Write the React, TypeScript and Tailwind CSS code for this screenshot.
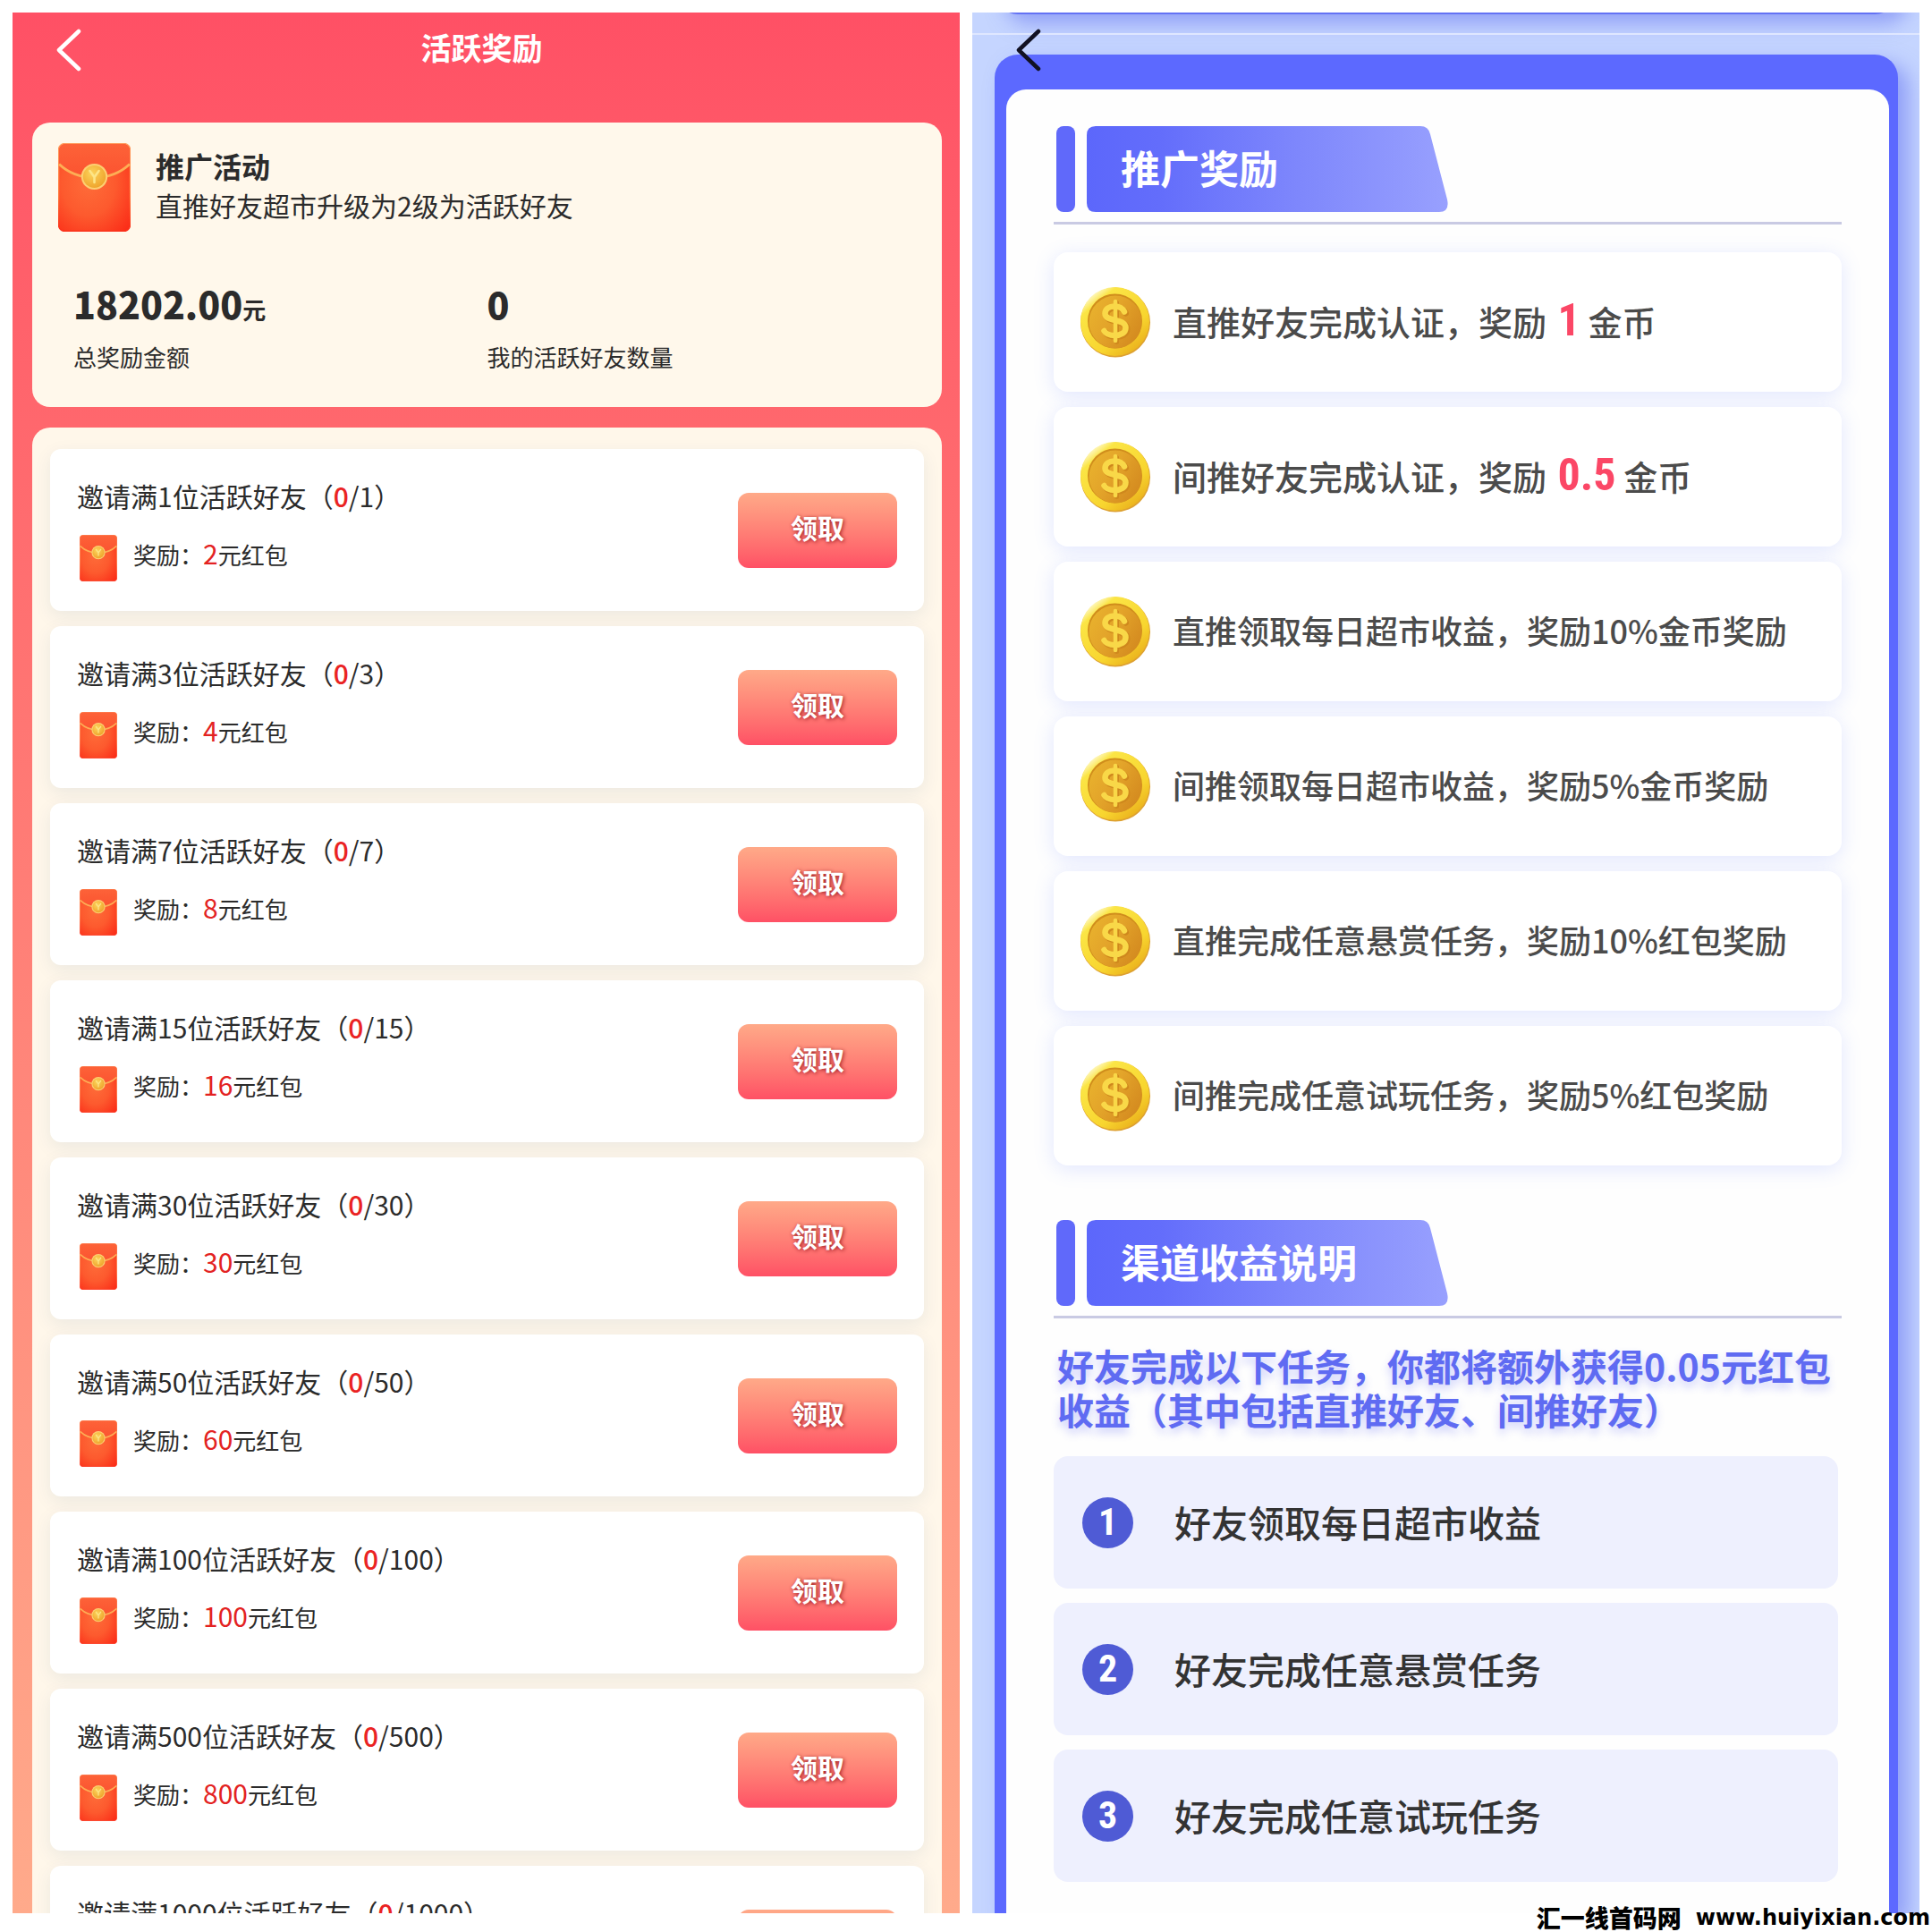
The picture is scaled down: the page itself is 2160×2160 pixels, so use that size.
import React from "react";

const levels = [
  { target: 1, reward: 2 },
  { target: 3, reward: 4 },
  { target: 7, reward: 8 },
  { target: 15, reward: 16 },
  { target: 30, reward: 30 },
  { target: 50, reward: 60 },
  { target: 100, reward: 100 },
  { target: 500, reward: 800 },
  { target: 1000, reward: 1000 },
];

const authRewards = [
  { label: "直推好友完成认证，奖励", amount: "1" },
  { label: "间推好友完成认证，奖励", amount: "0.5" },
];

const shareRewards = [
  "直推领取每日超市收益，奖励10%金币奖励",
  "间推领取每日超市收益，奖励5%金币奖励",
  "直推完成任意悬赏任务，奖励10%红包奖励",
  "间推完成任意试玩任务，奖励5%红包奖励",
];

const channelTasks = ["好友领取每日超市收益", "好友完成任意悬赏任务", "好友完成任意试玩任务"];

function Defs() {
  return (
    <svg className="absolute h-0 w-0" aria-hidden="true">
      <defs>
        <radialGradient id="envBody" cx="0.42" cy="0.45" r="0.75">
          <stop offset="0" stopColor="#fe6c39" />
          <stop offset="0.5" stopColor="#fd5a2e" />
          <stop offset="1" stopColor="#fb2d18" />
        </radialGradient>
        <linearGradient id="envFlap" x1="0" y1="0" x2="0" y2="1">
          <stop offset="0" stopColor="#fd6238" />
          <stop offset="1" stopColor="#fb5330" />
        </linearGradient>
        <linearGradient id="envEdge" x1="0" y1="0" x2="0" y2="1">
          <stop offset="0" stopColor="#ff9a5c" />
          <stop offset="0.6" stopColor="#ff7a3c" />
          <stop offset="1" stopColor="#fb2d18" />
        </linearGradient>
        <radialGradient id="envSeal" cx="0.4" cy="0.35" r="0.7">
          <stop offset="0" stopColor="#fcd45c" />
          <stop offset="1" stopColor="#eea22a" />
        </radialGradient>
        <linearGradient id="coinRim" x1="0.12" y1="0.12" x2="0.8" y2="0.95">
          <stop offset="0" stopColor="#fffbd8" />
          <stop offset="0.15" stopColor="#fbe545" />
          <stop offset="0.7" stopColor="#f8d52f" />
          <stop offset="1" stopColor="#eab01c" />
        </linearGradient>
        <linearGradient id="coinFace" x1="0" y1="0" x2="1" y2="0.6">
          <stop offset="0" stopColor="#eab52e" />
          <stop offset="0.5" stopColor="#e3a42a" />
          <stop offset="1" stopColor="#d58c20" />
        </linearGradient>
        <linearGradient id="tagFill" x1="0" y1="0" x2="1" y2="0">
          <stop offset="0" stopColor="#5c67fb" />
          <stop offset="0.2" stopColor="#636dfb" />
          <stop offset="0.6" stopColor="#7f88fc" />
          <stop offset="1" stopColor="#98a0fe" />
        </linearGradient>
      </defs>
    </svg>
  );
}

function Envelope({ className }: { className: string }) {
  return (
    <svg viewBox="0 0 80 99" preserveAspectRatio="none" className={className} aria-hidden="true">
      <rect x="0.500" y="0.500" width="79" height="98" rx="7" fill="url(#envBody)" stroke="url(#envEdge)" strokeWidth="1.5" />
      <path d="M1 24V8a7 7 0 0 1 7-7h64a7 7 0 0 1 7 7v16C68 34 54 38.500 40 38.500S12 34 1 24z" fill="url(#envFlap)" />
      <path d="M1 23.500C12 34 26 38.500 40 38.500S68 34 79 23.500" fill="none" stroke="#fdae55" strokeWidth="3" />
      <circle cx="40" cy="37.500" r="14.500" fill="#fdcf72" />
      <circle cx="40" cy="37.500" r="12.500" fill="url(#envSeal)" />
      <path d="M35 31l5 7 5-7M40 38v6" fill="none" stroke="#fde587" strokeWidth="2.500" strokeLinecap="round" />
    </svg>
  );
}

function Coin() {
  return (
    <svg viewBox="0 0 80 80" className="size-20 shrink-0" aria-hidden="true">
      <circle cx="40" cy="40.500" r="39" fill="#dda031" />
      <circle cx="39.500" cy="39.500" r="38.500" fill="url(#coinRim)" />
      <circle cx="39.500" cy="39" r="30.500" fill="#d08d1c" />
      <circle cx="40" cy="40" r="29.500" fill="url(#coinFace)" />
      <g fill="none" strokeLinecap="round" strokeLinejoin="round">
        <g stroke="#cf881d" strokeWidth="7" transform="translate(1.500 1.500)">
          <path d="M50 28.500c-2-4-6-6-11-6-6 0-10.500 3-10.500 8 0 10 23 5 23 16 0 5.500-5.500 8.500-12 8.500-5.500 0-10-1.500-12-5" />
          <path d="M40 17v44" strokeWidth="5" />
        </g>
        <g stroke="#f9d848" strokeWidth="6.500">
          <path d="M50 28.500c-2-4-6-6-11-6-6 0-10.500 3-10.500 8 0 10 23 5 23 16 0 5.500-5.500 8.500-12 8.500-5.500 0-10-1.500-12-5" />
          <path d="M40 17v44" strokeWidth="4.500" />
        </g>
      </g>
    </svg>
  );
}

function BackIcon() {
  return (
    <svg viewBox="0 0 28 48" className="h-12 w-7" fill="none" stroke="currentColor" strokeWidth="4.500" strokeLinecap="round" strokeLinejoin="round" aria-hidden="true">
      <path d="M25 3L3 24l22 21" />
    </svg>
  );
}

function SectionTitle({ children }: { children: React.ReactNode }) {
  return (
    <div className="flex h-[110px] items-start gap-[13px] border-b-3 border-[#c9cae3] pl-[3px]">
      <span className="h-24 w-[21px] rounded-lg bg-[#6069fa]" />
      <h2 className="relative flex h-24 w-[404px] items-center pb-1 pl-[38px] text-[44px] leading-[52px] font-bold text-white">
        <svg viewBox="0 0 404 96" preserveAspectRatio="none" className="absolute inset-0 h-full w-full" aria-hidden="true">
          <path d="M10 0H373Q382 0 384 9L403 82Q406 96 394 96H10Q0 96 0 86V10Q0 0 10 0z" fill="url(#tagFill)" />
        </svg>
        <span className="relative">{children}</span>
      </h2>
    </div>
  );
}

function RewardRow({ children }: { children: React.ReactNode }) {
  return (
    <li className="flex h-[156px] items-center gap-6 rounded-2xl bg-white pl-[29px] shadow-[0_4px_22px_rgba(92,120,255,0.18)]">
      <Coin />
      {children}
    </li>
  );
}

function ActivityPanel() {
  return (
    <section className="flex min-w-0 flex-col overflow-hidden bg-linear-to-b from-[#ff5065] to-[#ffaa8b] pr-5 pl-[22px]">
      <header className="flex h-[83px] shrink-0 items-center pr-[67px] pl-[27px] text-white">
        <button type="button" aria-label="返回" className="shrink-0">
          <BackIcon />
        </button>
        <h1 className="flex-1 pb-1.5 text-center text-[34px] leading-[44px] font-bold">活跃奖励</h1>
      </header>

      <div className="mt-10 shrink-0 rounded-[20px] bg-[#fff8eb] pt-[23px] pb-[38px] text-[#2b2b2b]">
        <div className="flex items-center gap-7 pl-[29px]">
          <Envelope className="h-[99px] w-[81px] shrink-0" />
          <div className="pb-1.5">
            <h2 className="text-[32px] leading-[44px] font-bold">推广活动</h2>
            <p className="text-[30px] leading-[44px]">直推好友超市升级为2级为活跃好友</p>
          </div>
        </div>
        <dl className="mt-[54px] flex">
          <div className="flex w-1/2 flex-col-reverse justify-end pl-[46px]">
            <dt className="mt-4 text-[26px] leading-9">总奖励金额</dt>
            <dd className="h-[52px] text-[41px] leading-[52px] font-black">
              18202.00<span className="text-[26px] leading-none font-bold">元</span>
            </dd>
          </div>
          <div className="flex w-1/2 flex-col-reverse justify-end">
            <dt className="mt-4 text-[26px] leading-9">我的活跃好友数量</dt>
            <dd className="h-[52px] text-[41px] leading-[52px] font-black">0</dd>
          </div>
        </dl>
      </div>

      <div className="mt-[23px] min-h-0 flex-1 overflow-hidden rounded-t-[20px] bg-[#fff7ea]">
        <ul className="flex flex-col gap-[17px] px-5 pt-6">
          {levels.map((level) => (
            <li
              key={level.target}
              className="flex h-[181px] shrink-0 items-center justify-between rounded-xl bg-white px-[30px] text-[#2b2b2b] shadow-[0_6px_20px_rgba(0,60,110,0.08)]"
            >
              <div className="flex flex-col gap-[22px] pb-1">
                <p className="text-[30px] leading-[44px]">
                  邀请满{level.target}位活跃好友（<span className="font-medium text-[#ea2323]">0</span>/{level.target}）
                </p>
                <p className="flex items-start pl-[3px] text-[26px] leading-[44px]">
                  <Envelope className="mr-[18px] h-[52px] w-[42px] shrink-0" />
                  <span>
                    奖励：<span className="text-[30px] leading-none text-[#e32222]">{level.reward}</span>元红包
                  </span>
                </p>
              </div>
              <button
                type="button"
                className="h-[84px] w-[178px] rounded-xl bg-linear-to-b from-[#ffa988] to-[#ff5065] pb-2 text-[30px] leading-[44px] font-bold text-white [text-shadow:1px_1px_4px_rgba(150,20,30,0.95)]"
              >
                领取
              </button>
            </li>
          ))}
        </ul>
      </div>
    </section>
  );
}

function PromotionPanel() {
  return (
    <section className="relative flex min-w-0 flex-col overflow-hidden bg-[#c5d5ff] pr-6 pl-[25px]">
      <div className="-mt-[38px] h-10 shrink-0 rounded-b-[26px] bg-[#6472f4] shadow-[12px_10px_22px_rgba(92,105,240,0.5)]" />
      <div className="-mr-6 -ml-[25px] mt-[21px] h-0.5 shrink-0 bg-[#dfe7ff]" />
      <button type="button" aria-label="返回" className="absolute top-[18px] left-[49px] text-[#111122]">
        <BackIcon />
      </button>

      <div className="mt-[22px] flex min-h-0 flex-1 flex-col rounded-t-[26px] bg-[#5c69ff] pt-[39px] pr-[10px] pl-[13px] shadow-[12px_10px_22px_rgba(92,105,240,0.5)]">
        <div className="min-h-0 flex-1 overflow-hidden rounded-t-[22px] bg-[#fefefe] px-[53px] pt-[41px]">
          <SectionTitle>推广奖励</SectionTitle>

          <ul className="mt-[31px] flex flex-col gap-[17px] text-[#4b4b4b]">
            {authRewards.map((item) => (
              <RewardRow key={item.label}>
                <p className="pb-1 text-[38px] leading-[52px] font-medium">
                  {item.label}{" "}
                  <strong className="ml-1 font-['Liberation_Sans_Narrow','Roboto_Condensed','Roboto',sans-serif] text-[50px] leading-[52px] font-bold text-[#fb4766]">
                    {item.amount}
                  </strong>{" "}
                  金币
                </p>
              </RewardRow>
            ))}
            {shareRewards.map((text) => (
              <RewardRow key={text}>
                <p className="pb-1 text-[36px] leading-[52px] font-medium">{text}</p>
              </RewardRow>
            ))}
          </ul>

          <div className="mt-[61px]">
            <SectionTitle>渠道收益说明</SectionTitle>
          </div>
          <p className="mt-7 pl-1 text-[41px] leading-[49px] font-bold text-[#5f6bf2] [text-shadow:0_6px_10px_rgba(92,104,242,0.3)]">
            好友完成以下任务，你都将额外获得0.05元红包收益（其中包括直推好友、间推好友）
          </p>

          <ol className="mt-7 mr-1 flex flex-col gap-4">
            {channelTasks.map((task, index) => (
              <li key={task} className="flex h-[148px] items-center gap-[46px] rounded-2xl bg-[#eef0fe] pl-8">
                <span className="flex size-[57px] items-center justify-center rounded-full bg-[#4f5bd5] font-['Liberation_Sans_Narrow','Roboto_Condensed','Roboto',sans-serif] text-[42px] leading-[52px] font-bold text-white">
                  {index + 1}
                </span>
                <span className="pb-0.5 text-[41px] leading-[52px] font-medium text-[#333333]">{task}</span>
              </li>
            ))}
          </ol>
        </div>
      </div>
    </section>
  );
}

export default function App() {
  return (
    <main className="relative grid h-screen grid-cols-2 gap-[14px] overflow-hidden bg-white px-[14px] pt-[14px] pb-[21px] font-['Noto_Sans_CJK_SC',sans-serif]">
      <Defs />
      <ActivityPanel />
      <PromotionPanel />
      <p className="absolute right-[2px] bottom-0 flex items-center gap-4 text-[27px] leading-8 font-black text-black">
        <span>汇一线首码网</span>
        <span className="font-['DejaVu_Sans',sans-serif] text-[24px] font-bold">www.huiyixian.com</span>
      </p>
    </main>
  );
}
